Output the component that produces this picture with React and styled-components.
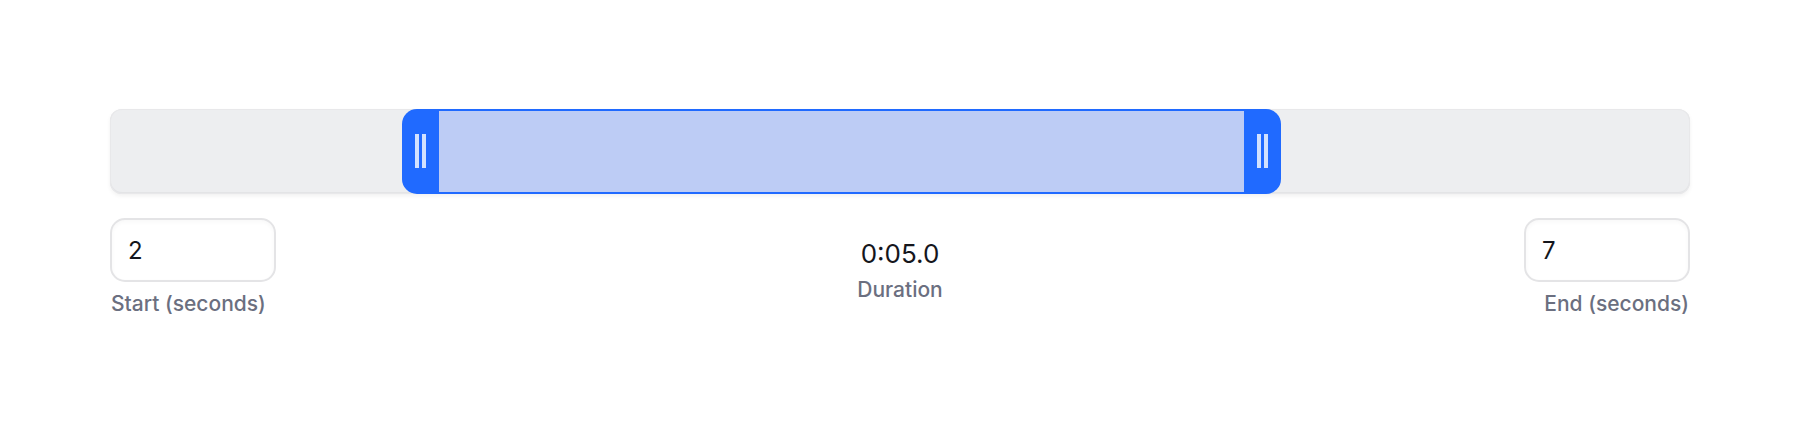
import React, { useState } from "react";
import styled, { createGlobalStyle, css } from "styled-components";

const CLIP_MIN = 0.266;
const CLIP_MAX = 9.429;
const HANDLE_WIDTH = 37;

const GlobalStyle = createGlobalStyle`
  * {
    box-sizing: border-box;
  }

  body {
    margin: 0;
    background: #ffffff;
    color: #15161c;
    font-family: Inter, "Liberation Sans", sans-serif;
  }
`;

const Trimmer = styled.main`
  display: flex;
  flex-direction: column;
  gap: 24px;
  padding: 109px 110px;
`;

const Track = styled.div`
  display: grid;
  height: 85px;
  border-radius: 12px;
  background: #edeef0;
  box-shadow: inset 0 0 0 1px #e8e8ea, inset 0 -1px 0 1px #e3e4e6,
    0 2px 4px rgba(0, 0, 0, 0.06);
`;

const Selection = styled.div`
  grid-area: 1 / 1;
  border: solid #206aff;
  border-width: 2px 0;
  background: #bdccf5;
`;

const thumb = css`
  box-sizing: border-box;
  width: ${HANDLE_WIDTH}px;
  height: 85px;
  border: none;
  border-radius: ${(props) =>
    props.$side === "start" ? "15px 0 0 15px" : "0 15px 15px 0"};
  background: linear-gradient(#d2e1ff, #d2e1ff) 13px 25px / 4px 34px no-repeat,
    linear-gradient(#d2e1ff, #d2e1ff) 20px 25px / 4px 34px no-repeat, #206aff;
  cursor: ew-resize;
  pointer-events: auto;
`;

const Handle = styled.input`
  grid-area: 1 / 1;
  appearance: none;
  width: 100%;
  height: 85px;
  margin: 0;
  background: transparent;
  pointer-events: none;

  &::-webkit-slider-thumb {
    appearance: none;
    ${thumb}
  }

  &::-moz-range-thumb {
    ${thumb}
  }
`;

const Details = styled.div`
  display: grid;
  grid-template-columns: 1fr auto 1fr;
`;

const Field = styled.div`
  display: flex;
  flex-direction: column;
  align-items: ${(props) => (props.$side === "start" ? "flex-start" : "flex-end")};
  gap: 8px;
`;

const NumberInput = styled.input`
  appearance: textfield;
  width: 166px;
  height: 64px;
  padding: 0 16px;
  border: 2px solid #e4e4e6;
  border-radius: 15px;
  background: #ffffff;
  box-shadow: inset 0 2px 4px rgba(0, 0, 0, 0.03);
  color: inherit;
  font: inherit;
  font-size: 24px;

  &::-webkit-inner-spin-button {
    appearance: none;
    margin: 0;
  }
`;

const Label = styled.label`
  padding: 0 1px;
  color: #6b6f80;
  font-size: 21px;
  font-weight: 500;
  line-height: 28px;
`;

const Summary = styled.div`
  display: flex;
  flex-direction: column;
  align-items: center;
  gap: 2px;
  padding-top: 16px;
`;

const Time = styled.output`
  font-size: 26px;
  line-height: 40px;
`;

const formatTime = (seconds) => {
  const minutes = Math.floor(seconds / 60);
  const rest = (seconds - minutes * 60).toFixed(1).padStart(4, "0");
  return `${minutes}:${rest}`;
};

// left edge of a handle, measured the way the browser places a range thumb
const handleLeft = (value) => {
  const ratio = (value - CLIP_MIN) / (CLIP_MAX - CLIP_MIN);
  return `(100% - ${HANDLE_WIDTH}px) * ${ratio}`;
};

const App = () => {
  const [start, setStart] = useState(2);
  const [end, setEnd] = useState(7);

  const handleStart = (e) => {
    setStart(Math.min(Number(e.target.value), end));
  };

  const handleEnd = (e) => {
    setEnd(Math.max(Number(e.target.value), start));
  };

  return (
    <>
      <GlobalStyle />
      <Trimmer>
        <Track>
          <Selection
            style={{
              marginLeft: `calc(${handleLeft(start)} + ${HANDLE_WIDTH - 1}px)`,
              width: `calc(${handleLeft(end)} - ${handleLeft(start)} - ${HANDLE_WIDTH - 2}px)`,
            }}
          />
          <Handle
            $side="start"
            type="range"
            aria-label="Clip start"
            min={CLIP_MIN}
            max={CLIP_MAX}
            step="any"
            value={start}
            onChange={handleStart}
          />
          <Handle
            $side="end"
            type="range"
            aria-label="Clip end"
            min={CLIP_MIN}
            max={CLIP_MAX}
            step="any"
            value={end}
            onChange={handleEnd}
          />
        </Track>
        <Details>
          <Field $side="start">
            <NumberInput id="start" type="number" value={start} onChange={handleStart} />
            <Label htmlFor="start">Start (seconds)</Label>
          </Field>
          <Summary>
            <Time id="duration">{formatTime(end - start)}</Time>
            <Label htmlFor="duration">Duration</Label>
          </Summary>
          <Field $side="end">
            <NumberInput id="end" type="number" value={end} onChange={handleEnd} />
            <Label htmlFor="end">End (seconds)</Label>
          </Field>
        </Details>
      </Trimmer>
    </>
  );
};

export default App;
